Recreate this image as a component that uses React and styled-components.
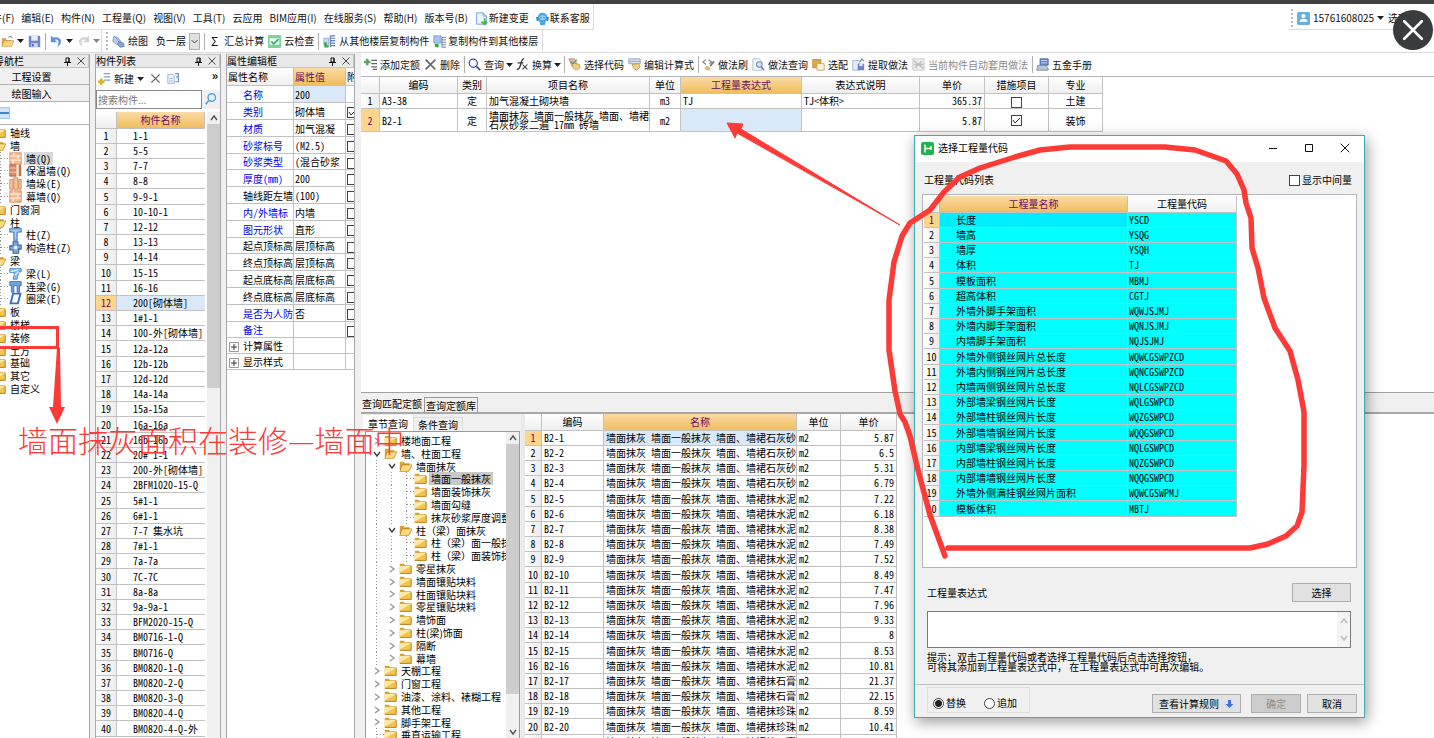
import React from "react";
import styled, { createGlobalStyle, css } from "styled-components";

const sans = `"Noto Sans CJK SC", "Liberation Sans", sans-serif`;
const red = "#fd3a36";

const Global = createGlobalStyle`
  * { box-sizing: border-box; }
  body { margin: 0; background: #fff; color: #000; font: 10px/14px ${sans}; }
  button, input, select, textarea { font: inherit; color: inherit; margin: 0; }
`;

const Page = styled.div`
  position: relative;
  height: 100vh;
  display: flex;
  flex-direction: column;
  overflow: hidden;
  white-space: nowrap;
`;
const TopStrip = styled.div`
  flex: none;
  height: 4px;
  background: #404040;
`;
const MenuRow = styled.div`
  flex: none;
  height: 26px;
  display: flex;
  justify-content: space-between;
`;
const MenuBar = styled.nav`
  display: flex;
  align-items: center;
  gap: 7px;
  height: 26px;
  padding: 3px 3px 0 0;
  margin-left: -18px;
  border-right: 1px solid #dcdcdc;
  border-bottom: 1px solid #dcdcdc;
`;
const FlatButton = styled.button`
  display: flex;
  align-items: center;
  gap: ${(p) => p.$gap || 3}px;
  border: 0;
  padding: 0;
  background: none;
  white-space: nowrap;
  line-height: 14px;
  color: ${(p) => (p.disabled ? "#8a8a8a" : "#111")};
`;
const UserBar = styled.div`
  width: 145px;
  height: 26px;
  display: flex;
  align-items: center;
  gap: 4px;
  padding: 3px 0 0 2px;
  overflow: hidden;
  border-bottom: 1px solid #dcdcdc;
`;
const Grip = styled.span`
  flex: none;
  height: 18px;
  border-left: 2px dotted #b8b8b8;
`;
const ToolRow = styled.div`
  flex: none;
  height: 23px;
  border-bottom: 1px solid #dcdcdc;
  display: flex;
`;
const ToolBar = styled.div`
  display: flex;
  align-items: center;
  gap: ${(p) => p.$gap || 4}px;
  padding: 0 ${(p) => p.$pad || 3}px;
  border-right: 1px solid #dcdcdc;
`;
const Sep = styled.span`
  flex: none;
  width: 1px;
  height: 17px;
  background: #b0b0b0;
`;
const Sigma = styled.span`
  font-size: 12px;
  margin-left: 2px;
`;
const SelectBox = styled.label`
  position: relative;
  display: flex;
  margin-left: 2px;
  select {
    appearance: none;
    width: 46px;
    height: 17px;
    padding: 0 10px 0 2px;
    border: 0;
    border-radius: 0;
    background: #fcfcfc;
  }
  svg {
    position: absolute;
    right: 0;
    top: 0;
    pointer-events: none;
  }
`;

const Work = styled.main`
  flex: 1;
  min-height: 0;
  display: flex;
  gap: 5px;
  padding-top: 1px;
  background: #f0f0f0;
`;
const Panel = styled.section`
  flex: none;
  width: ${(p) => p.$w}px;
  display: flex;
  flex-direction: column;
  overflow: hidden;
  background: #fff;
  border: solid #a8a8ac;
  border-width: 0 1px 0 ${(p) => (p.$first ? 0 : 1)}px;
`;
const PanelHead = styled.header`
  flex: none;
  height: 14px;
  display: flex;
  align-items: center;
  gap: 6px;
  padding-right: 3px;
  background: #e9e9e9;
  border: 1px solid #c4c4c4;
  border-left: 0;
  line-height: 12px;
  h2 { flex: 1; margin: 0 0 0 ${(p) => (p.$clipped ? -6 : 0)}px; font: inherit; font-size: 10px; }
`;
const IconButton = styled.button`
  display: flex;
  border: 0;
  padding: 0;
  background: none;
`;
const NavButton = styled.button`
  flex: none;
  height: 17px;
  padding: 0 26px 0 0;
  border: 0;
  border-bottom: 1px solid #b4b4b4;
  background: #f0f0f0;
  line-height: 15px;
`;
const NavMode = styled.div`
  flex: none;
  height: 23px;
  padding-top: 5px;
  border-bottom: 1px solid #b4b4b4;
  span { display: block; width: 10px; height: 12px; background: #cfe3fa; border: 1px solid #a9c8ee; border-left: 0; }
  i { display: block; margin-top: 4px; height: 2px; background: #3e86c8; }
`;

const NavTree = styled.ul`
  list-style: none;
  margin: 0;
  padding: 1px 0 0;
  margin-left: -7px;
`;
const Tree = styled.ul`
  list-style: none;
  margin: 0;
  padding: 2px 0 0 3px;
  flex: 1;
  overflow: hidden;
`;
const TreeItem = styled.li`
  display: flex;
  align-items: center;
  height: 13px;
  line-height: 13px;
  font-feature-settings: ${(p) => (p.$wide ? "normal" : '"hwid"')};
  &:nth-child(5n + 3) { height: 12px; }
  span.label { margin-left: 2px; padding: 0 2px; background: ${(p) => (p.$on ? p.$on : "none")}; }
  svg { flex: none; }
`;
const Guide = styled.span`
  flex: none;
  width: ${(p) => p.$w || 15}px;
  height: 13px;
  display: flex;
  align-items: center;
  justify-content: center;
  ${(p) => p.$line && css`background: repeating-linear-gradient(#999 0 1px, transparent 1px 3px) 7px 0 / 1px 13px no-repeat;`}
  ${(p) => p.$leaf && css`
    background:
      repeating-linear-gradient(#999 0 1px, transparent 1px 3px) 7px 0 / 1px 13px no-repeat,
      repeating-linear-gradient(90deg, #999 0 1px, transparent 1px 3px) 8px 6px / 8px 1px no-repeat;`}
`;

const ListTools = styled.div`
  flex: none;
  height: 21px;
  display: flex;
  align-items: center;
  gap: 6px;
  padding: 0 2px;
  b { margin: -8px 0 0 auto; font-size: 12px; }
`;
const SearchRow = styled.div`
  flex: none;
  display: flex;
  align-items: center;
  margin-bottom: 3px;
  height: 20px;
  input { width: 106px; height: 19px; border: 1px solid #8a8a8a; border-radius: 0; padding: 0 1px; background: #fff; }
  input::placeholder { color: #777; }
  button { flex: 1; height: 19px; background: #f0f0f0; justify-content: center; align-items: center; }
`;
const Scrolled = styled.div`
  flex: 1;
  min-height: 0;
  display: flex;
  overflow: hidden;
`;
const ScrollBar = styled.div`
  flex: none;
  width: 13px;
  margin-left: auto;
  display: flex;
  flex-direction: column;
  align-items: center;
  background: #f0f0f0;
  i { width: 100%; height: ${(p) => p.$thumb}px; background: #cdcdcd; }
  svg { flex: none; margin: 2px 0; }
  svg:last-child { margin-top: auto; }
`;

const Grid = styled.table`
  table-layout: fixed;
  width: ${(p) => p.$w}px;
  border-collapse: separate;
  border-spacing: 0;
  font-feature-settings: "hwid";
  th, td {
    height: 15px;
    padding: 0 ${(p) => p.$pad || 2}px;
    overflow: hidden;
    border: solid #c2c2c2;
    border-width: 0 1px 1px 0;
    font-weight: normal;
    text-align: left;
    line-height: 14px;
  }
  thead th {
    height: ${(p) => p.$head || 17}px;
    text-align: center;
    background: linear-gradient(#fff, #efefef);
  }
  tbody th { padding: 0; text-align: center; background: linear-gradient(90deg, #fff, #ececec); }
  thead th.hot { background: linear-gradient(#fadba4, #f0bd5e); color: #6a0d5c; }
  tbody th.hot { background: #ffd48c; color: #6a0d5c; }
  td.sel { background: #d9e9f8; }
  td.num { text-align: right; }
  td.mid { text-align: center; }
  td.name { padding-right: 0; }
  tbody tr:nth-child(5n) > * { height: 16px; }
`;
const ListGrid = styled(Grid)`
  tbody td { padding-left: 16px; border-right: 0; }
`;
const PropGrid = styled(Grid)`
  tbody th, tbody td { height: 17px; line-height: 15px; background: #fff; }
  tbody tr:nth-child(5n) > * { height: 16px; }
  tbody tr.group > * { height: 15px; }
  tbody th { padding-left: 16px; text-align: left; color: #0000f0; }
  tbody tr.plain th { color: #000; }
  tbody tr.group th { padding-left: 2px; color: #000; }
  thead th { text-align: left; }
  td.sel { background: #d9e9f8; }
  th button { display: inline-flex; vertical-align: middle; margin-right: 4px; }
  td:last-child, thead th:last-child { border-right: 0; }
`;
const MainGrid = styled(Grid)`
  tbody tr.tall > * { height: 23px; line-height: 9px; }
`;
const Cyan = styled(Grid)`
  tbody td { background: #0ff; }
  tbody td:nth-child(2) { padding-left: 16px; }
  tbody td:nth-child(3) { padding-left: 1px; }
  tbody tr:first-child td:nth-child(2) { background: #00ecff; }
`;
const Check = styled.input`
  appearance: none;
  flex: none;
  display: inline-block;
  vertical-align: middle;
  width: 11px;
  height: 11px;
  border: 1px solid #444;
  border-radius: 0;
  background: #fff;
`;
const CheckCell = styled.label`
  position: relative;
  display: inline-flex;
  vertical-align: middle;
  svg { position: absolute; left: 1px; top: 1px; pointer-events: none; }
`;

const Main = styled.section`
  flex: 1;
  min-width: 0;
  display: flex;
  flex-direction: column;
  margin-left: 1px;
  margin-top: -1px;
  background: #fff;
`;
const MainTools = styled.div`
  flex: none;
  height: 24px;
  display: flex;
  align-items: center;
  gap: 4px;
  padding-left: 3px;
  border-bottom: 1px solid #b4b4b4;
  ${Sep} { margin-right: -1px; }
  svg + svg, button > svg:last-child:not(:first-child) { margin: 0 -1px; }
`;
const MainSheet = styled.div`
  flex: none;
  height: 315px;
`;
const Tabs = styled.div`
  flex: none;
  height: 22px;
  display: flex;
  align-items: flex-end;
  gap: 2px;
  background: #f0f0f0;
  border-top: 1px solid #a0a0a0;
  border-bottom: 2px solid #a8a8a8;
  padding-left: 1px;
`;
const Tab = styled.button`
  height: ${(p) => (p.$on ? 17 : 15)}px;
  padding: 0 ${(p) => (p.$on ? 0 : 1)}px;
  border: ${(p) => (p.$on ? 0 : "1px solid #999")};
  border-bottom: 0;
  background: #f0f0f0;
  line-height: 13px;
`;
const Lower = styled.div`
  flex: 1;
  min-height: 0;
  display: flex;
  overflow: hidden;
`;
const Chapter = styled.div`
  flex: none;
  width: 164px;
  display: flex;
  flex-direction: column;
  background: #f0f0f0;
  border-right: 4px solid #eaeaea;
`;
const SubTabs = styled.div`
  flex: none;
  display: flex;
  align-items: flex-end;
  height: 17px;
  padding-left: 2px;
`;
const SubTab = styled.button`
  height: ${(p) => (p.$on ? 16 : 14)}px;
  padding: 0 4px;
  border: 1px solid ${(p) => (p.$on ? "#fff" : "#dcdcdc")};
  border-bottom: 0;
  background: ${(p) => (p.$on ? "#fff" : "#f0f0f0")};
  line-height: 13px;
`;
const TreeBox = styled.div`
  flex: 1;
  min-height: 0;
  display: flex;
  margin: 0 0 0 4px;
  width: 155px;
  background: #fff;
  border: 1px solid #9a9aa0;
  border-bottom: 0;
`;

const Dialog = styled.section`
  position: absolute;
  left: 914px;
  top: 135px;
  width: 451px;
  background: #f0f0f0;
  border: 1px solid #3fa9b5;
  box-shadow: 2px 4px 14px rgba(0, 0, 0, 0.4);
`;
const TitleBar = styled.header`
  height: 26px;
  display: flex;
  align-items: center;
  gap: 4px;
  padding: 0 14px 2px 6px;
  background: #fff;
  h1 { flex: 1; margin: 0; font: inherit; font-size: 10px; }
  button + button { margin-left: 22px; }
`;
const DialogRow = styled.div`
  display: flex;
  align-items: center;
  justify-content: space-between;
  padding: ${(p) => p.$p};
`;
const OptionLabel = styled.label`
  display: flex;
  align-items: center;
  gap: 2px;
`;
const CodeBox = styled.div`
  height: 374px;
  margin: 0 7px;
  padding: 1px;
  background: #fff;
  border: 1px solid #b4b4bc;
`;
const PushButton = styled.button`
  height: 19px;
  width: ${(p) => p.$w}px;
  display: flex;
  align-items: center;
  justify-content: center;
  gap: 6px;
  padding: 0;
  border: 1px solid #adadad;
  border-radius: 0;
  background: ${(p) => (p.disabled ? "#cccccc" : "#e1e1e1")};
  color: ${(p) => (p.disabled ? "#8c8c8c" : "#000")};
`;
const Expression = styled.div`
  height: 37px;
  margin: 0 13px 0 12px;
  display: flex;
  background: #fff;
  border: 1px solid #7a7a7a;
  textarea { flex: 1; border: 0; padding: 1px; resize: none; outline: 0; background: none; overflow: hidden; }
  div { width: 13px; display: flex; flex-direction: column; justify-content: space-between; align-items: center; padding: 5px 0; background: #f4f4f4; }
`;
const Hint = styled.p`
  margin: 4px 12px 12px;
  line-height: 10px;
`;
const Footer = styled.footer`
  display: flex;
  align-items: flex-end;
  gap: 10px;
  height: 33px;
  padding: 3px 7px 4px 12px;
  border-top: 1px solid #c0c0c0;
  fieldset {
    display: flex; align-items: center; gap: 18px; height: 26px; width: 103px;
    margin: 0 auto 0 0; padding: 6px 0 0 5px; border: 1px solid #dedede;
  }
  button:last-child { margin-left: -4px; }
`;
const Radio = styled.input.attrs({ type: "radio" })`
  appearance: none;
  width: 11px;
  height: 11px;
  border: 1px solid #444;
  border-radius: 50%;
  background: #fff;
  &:checked { background: radial-gradient(#222 0 3px, #fff 4px); }
`;

const Marks = styled.svg`
  position: absolute;
  left: 0;
  top: 0;
  pointer-events: none;
`;
const Note = styled.p`
  position: absolute;
  left: 18px;
  top: 419px;
  margin: 0;
  color: ${red};
  font-size: 30px;
  font-weight: 300;
  line-height: 40px;
`;
const CloseViewer = styled.button`
  position: absolute;
  right: 1px;
  top: 10px;
  width: 40px;
  height: 40px;
  display: flex;
  align-items: center;
  justify-content: center;
  border: 0;
  border-radius: 50%;
  background: #3a3b3c;
`;

/* ---- icons ---- */
const shapes = {
  open: <><path d="M1 4h5l1 2h6v7H1z" fill="#d9a441" /><path d="M4 7h12l-3 7H1z" fill="#f8d488" stroke="#c48f2f" strokeWidth=".7" /><path d="M9 3c2-2 4-1 5 1" fill="none" stroke="#7d9ac7" strokeWidth="1.3" /></>,
  save: <><path d="M1 1h14v14H1z" fill="#6f86cf" /><path d="M4 1h8v6H4z" fill="#e8edfb" /><path d="M4 10h8v5H4z" fill="#c9d2ef" /><path d="M5 11h2v3H5z" fill="#4a5fa8" /></>,
  undo: <path d="M1 1v8h8L6 6c4-2 6 1 3 9 8-6 5-14-5-12z" fill="#5f93dd" />,
  redo: <path d="M15 1v8H7l3-3C6 4 4 7 7 15-1 9 2 1 12 3z" fill="#d3d3d3" />,
  paint: <><path d="M2 2l5 1 4 5-5 4-5-4z" fill="#bcd0ec" stroke="#6d8fc4" /><path d="M8 8l6 2 1 4-5 1-3-3z" fill="#8fa9d6" stroke="#4f6fae" /><path d="M3 1l5 7" stroke="#6d8fc4" /></>,
  check: <><rect width="16" height="16" rx="1" fill="#7fd09b" /><path d="M2 4h12v8H2z" fill="#e7f8ec" /><path d="M4 8l3 3 6-6" fill="none" stroke="#2fae62" strokeWidth="2" /></>,
  copyFrom: <><path d="M1 4h6v8H1z" fill="#c8d6ee" stroke="#8fa8d2" /><path d="M9 1h6M9 4h6M9 7h6M9 10h6M9 13h6M9 1v14" stroke="#5f7fb8" strokeWidth="1.4" /><path d="M3 9v5h4" stroke="#35a853" strokeWidth="3" fill="none" /></>,
  copyTo: <><path d="M1 1h9v9H1z" fill="#a9c2ea" stroke="#7d9cd0" /><path d="M11 3h5M11 6h5M11 9h5M11 12h5M11 15h5M11 3v12" stroke="#6a7f9f" strokeWidth="1.2" /><path d="M2 11h5v4H3z" fill="#35a853" /></>,
  doc: <><path d="M2 1h8l4 4v10H2z" fill="#e9f3fc" stroke="#5b9bd0" /><path d="M10 1v4h4" fill="none" stroke="#5b9bd0" /><path d="M12 8v7M8 12l4 3 3-3" fill="none" stroke="#4cb648" strokeWidth="2.4" /></>,
  support: <><circle cx="8" cy="7" r="6" fill="#49a7e4" /><path d="M0 6h3v5H1zM13 6h3l-1 5h-2z" fill="#2d86c8" /><ellipse cx="8" cy="7" rx="4" ry="3" fill="#8fd0f5" /><path d="M6 6v2M10 6v2" stroke="#1c6aa8" /><path d="M5 12h7l-1 4H5z" fill="#49a7e4" /></>,
  user: <><rect width="16" height="16" rx="2" fill="#6aaedb" /><circle cx="8" cy="5" r="2.6" fill="#fff" /><path d="M3 12c0-5 10-5 10 0z" fill="#fff" /></>,
  addRow: <><path d="M9 3h7M9 7h7M9 11h7M11 14h5" stroke="#666" strokeWidth="1.4" /><path d="M4 1v8M0 5h8" stroke="#5da56c" strokeWidth="3" /></>,
  newItem: <><path d="M7 2h8M7 6h8M7 10h8" stroke="#7ba3d2" strokeWidth="1.6" /><path d="M4 8v8M0 12h8" stroke="#d5b32d" strokeWidth="3" /></>,
  del: <path d="M2 2l12 12M14 2L2 14" stroke="#666" strokeWidth="2" fill="none" />,
  search: <><circle cx="6.5" cy="6.5" r="5" fill="#f2f5ff" stroke="#3c49a8" strokeWidth="1.5" /><path d="M10 10l5 5" stroke="#3c49a8" strokeWidth="2" /></>,
  find: <><circle cx="9" cy="6" r="5" fill="#e8f5ff" stroke="#4ba0de" strokeWidth="1.8" /><path d="M5 10l-4 5" stroke="#4ba0de" strokeWidth="2.2" /></>,
  fx: <><path d="M10 1c-5-1-3 14-9 13M2 6h7" fill="none" stroke="#333" strokeWidth="1.6" /><path d="M8 8l6 6M14 8l-6 6" stroke="#333" strokeWidth="1.3" /></>,
  pick: <><path d="M1 1h7l3 6-6 3z" fill="#e4b7b0" stroke="#b88a82" /><path d="M5 6l9 2 1 4-5 3-4-3z" fill="#f1cf8b" stroke="#c09649" /><path d="M3 4l3 3 5-5" fill="none" stroke="#5f9e61" strokeWidth="1.5" /></>,
  edit: <><path d="M1 1h14v6H1z" fill="#d9dfec" stroke="#8b99b8" /><path d="M1 4h14" stroke="#8b99b8" /><path d="M5 8l8-1 2 4-4 4-4-2z" fill="#f1cf8b" stroke="#c09649" /></>,
  brush: <><path d="M5 2L1 5l4 3M8 2l4 3-3 2" fill="none" stroke="#777" strokeWidth="1.3" /><path d="M15 4l-5 6" stroke="#777" strokeWidth="2" /><path d="M6 10l4 3-2 2-4-2z" fill="#efc46a" stroke="#c09649" /></>,
  docFind: <><path d="M1 1h8l3 3v11H1z" fill="#f3f6fb" stroke="#a7b6cc" /><circle cx="9" cy="8" r="3.5" fill="#cfe4f7" stroke="#6d93bf" strokeWidth="1.3" /><path d="M11 11l4 4" stroke="#7d8aa0" strokeWidth="2" /></>,
  paste: <><path d="M1 2h10v10H1z" fill="#e4ad3e" stroke="#b27f22" /><path d="M4 1h4v3H4z" fill="#a0a0a0" /><path d="M6 7h9v8H6z" fill="#fdf6dd" stroke="#b9a15e" /></>,
  extract: <><path d="M1 3h8v12H1z" fill="#e6edf8" stroke="#93a7cb" /><path d="M7 7h8v8H7z" fill="#6f7fcb" /><path d="M9 7h4v3H9z" fill="#e8edfb" /><path d="M10 5l2-4 3 3" stroke="#5f7fb8" fill="none" strokeWidth="1.3" /></>,
  off: <><path d="M1 1h14v14H1z" fill="#ececec" stroke="#c6c6c6" /><path d="M2 3l12 10M4 12l8-8M2 8h12" stroke="#bdbdbd" strokeWidth="1.6" /></>,
  manual: <><path d="M5 1h10v8H5z" fill="#5e85cf" stroke="#4569b0" /><path d="M6 3h8M6 6h8" stroke="#dfe8fa" /><path d="M2 9h10l3 4v2H1z" fill="#b9c3d4" stroke="#7987a0" /></>,
  copy: <><path d="M1 3h6l2 2v9H1z" fill="#eef3fb" stroke="#8fa8d2" /><path d="M3 8h4M3 11h4" stroke="#8fa8d2" /><path d="M10 2h4v4h-3M14 6v6h-4" fill="none" stroke="#6d93d0" strokeWidth="1.5" /></>,
  folder: <><path d="M1 2h5l1 2h8v10H1z" fill="#dba42e" /><path d="M1 5h14v9H1z" fill="#f3c450" /><path d="M1 5h14L1 13z" fill="#fde9a6" /><path d="M1 14h14V5" fill="none" stroke="#a87417" /></>,
  folderOpen: <><path d="M1 2h5l1 2h6v9H1z" fill="#dba42e" /><path d="M4 6h12l-4 8H1z" fill="#fbdc83" stroke="#b07d1c" strokeWidth=".8" /></>,
  wall: <><path d="M1 1h14v14H1z" fill="#f2bd94" stroke="#d08155" /><path d="M1 5h14M1 10h14M6 1v4M11 5v5M5 10v5" stroke="#fff1e4" strokeWidth="1.2" /></>,
  wall2: <><path d="M1 1h8v14H1z" fill="#d98c6d" stroke="#a95c40" /><path d="M9 1h3v14H9z" fill="#f6e3b5" /><path d="M12 1h3v14h-3z" fill="#c3714f" /><path d="M1 5h8M1 10h8" stroke="#f8dccb" /></>,
  wall3: <><path d="M1 3h4v12H1zM6 1h5v14H6zM12 3h3v12h-3z" fill="#f5c4a0" stroke="#cf7c4e" /></>,
  column: <path d="M1 1h14v4h-4l-1 1v9H6V6L5 5H1z" fill="#a9c9f0" stroke="#3f74b8" strokeWidth="1.3" />,
  column2: <><path d="M5 1h6v4h4v5h-3v5H5v-4H1V6h4z" fill="#7ea7dc" stroke="#35629f" strokeWidth="1.3" /><path d="M6 6h4v4H6z" fill="#e4effc" /></>,
  beam: <><path d="M1 2h14v4h-3l-2 9H5l2-8H1z" fill="#8fc0ee" stroke="#3a7fc4" /><path d="M2 6l9-3M7 10l5-4" stroke="#e3f2ff" strokeWidth="1.4" /></>,
  beam2: <path d="M1 2h14v5h-2v8h-3V7H6v8H3V7H1z" fill="#6fa4de" stroke="#2f67a8" />,
  beam3: <path d="M5 2h9l-3 12H2z" fill="#fff" stroke="#3a6fc4" strokeWidth="2.4" />,
};
const Icon = ({ n, s = 13 }) => (
  <svg width={s} height={s} viewBox="0 0 16 16" aria-hidden="true">{shapes[n]}</svg>
);
const Caret = ({ c = "#222" }) => (
  <svg width="7" height="4" viewBox="0 0 7 4" aria-hidden="true"><path d="M0 0h7L3.500 4z" fill={c} /></svg>
);
const Chevron = ({ d = "up", c = "#555" }) => {
  const path = { up: "M1 6l3-4 3 4", down: "M1 2l3 4 3-4", right: "M2 1l4 3-4 3" }[d];
  return <svg width="8" height="8" viewBox="0 0 8 8" aria-hidden="true"><path d={path} fill="none" stroke={c} strokeWidth="1.4" /></svg>;
};
const Cross = ({ s = 8, w = 1.2, c = "#444" }) => (
  <svg width={s} height={s} viewBox="0 0 10 10" aria-hidden="true"><path d="M1 1l8 8M9 1l-8 8" stroke={c} strokeWidth={w} strokeLinecap="round" /></svg>
);
const Pin = () => (
  <svg width="7" height="9" viewBox="0 0 7 9" aria-hidden="true"><path d="M2 1h3v4H2zM0 5.500h7M3.500 6v3M5 1v4" fill="none" stroke="#111" /></svg>
);

/* ---- data ---- */
const menus = ["文件(F)", "编辑(E)", "构件(N)", "工程量(Q)", "视图(V)", "工具(T)", "云应用", "BIM应用(I)", "在线服务(S)", "帮助(H)", "版本号(B)"];
const navTree = [
  [0, "轴线"], [0, "墙", "folderOpen"], [1, "墙(Q)", "wall", "on"], [1, "保温墙(Q)", "wall2"], [1, "墙垛(E)", "wall3"], [1, "幕墙(Q)", "wall"],
  [0, "门窗洞"], [0, "柱", "folderOpen"], [1, "柱(Z)", "column"], [1, "构造柱(Z)", "column2"], [0, "梁", "folderOpen"], [1, "梁(L)", "beam"],
  [1, "连梁(G)", "beam2"], [1, "圈梁(E)", "beam3"], [0, "板"], [0, "楼梯"], [0, "装修"], [0, "土方"], [0, "基础"], [0, "其它"], [0, "自定义"],
];
const components = ["1-1", "5-5", "7-7", "8-8", "9-9-1", "10-10-1", "12-12", "13-13", "14-14", "15-15", "16-16", "200[砌体墙]", "1#1-1", "100-外[砌体墙]", "12a-12a", "12b-12b", "12d-12d", "14a-14a", "15a-15a", "16a-16a", "16b-16b", "20# 1-1", "200-外[砌体墙]", "2BFM1020-15-Q", "5#1-1", "6#1-1", "7-7 集水坑", "7#1-1", "7a-7a", "7C-7C", "8a-8a", "9a-9a-1", "BFM2020-15-Q", "BM0716-1-Q", "BM0716-Q", "BM0820-1-Q", "BM0820-2-Q", "BM0820-3-Q", "BM0820-4-Q", "BM0820-4-Q-外"];
const props = [
  ["名称", "200", "", "sel"], ["类别", "砌体墙", "", "", true], ["材质", "加气混凝"], ["砂浆标号", "(M2.5)"], ["砂浆类型", "(混合砂浆"], ["厚度(mm)", "200"],
  ["轴线距左墙", "(100)", "plain"], ["内/外墙标", "内墙"], ["图元形状", "直形"], ["起点顶标高", "层顶标高", "plain"], ["终点顶标高", "层顶标高", "plain"],
  ["起点底标高", "层底标高", "plain"], ["终点底标高", "层底标高", "plain"], ["是否为人防", "否"], ["备注", ""],
];
const chapters = [
  [0, "right", "楼地面工程"], [0, "down", "墙、柱面工程"], [1, "down", "墙面抹灰"], [2, "", "墙面一般抹灰", "on"], [2, "", "墙面装饰抹灰"], [2, "", "墙面勾缝"],
  [2, "", "抹灰砂浆厚度调整"], [1, "down", "柱（梁）面抹灰"], [2, "", "柱（梁）面一般抹灰"], [2, "", "柱（梁）面装饰抹灰"], [1, "right", "零星抹灰"],
  [1, "right", "墙面镶贴块料"], [1, "right", "柱面镶贴块料"], [1, "right", "零星镶贴块料"], [1, "right", "墙饰面"], [1, "right", "柱(梁)饰面"], [1, "right", "隔断"],
  [1, "right", "幕墙"], [0, "right", "天棚工程"], [0, "right", "门窗工程"], [0, "right", "油漆、涂料、裱糊工程"], [0, "right", "其他工程"], [0, "right", "脚手架工程"], [0, "", "垂直运输工程"],
];
const prices = ["5.87", "6.5", "5.31", "6.79", "7.22", "6.18", "8.38", "7.49", "7.52", "8.49", "7.47", "7.96", "9.33", "8", "8.53", "10.81", "21.37", "22.15", "8.59", "10.41", "12.26"];
const materialOf = (i) => (i < 4 ? "石灰砂" : i < 16 ? "抹水泥" : i < 18 ? "抹石膏" : i < 20 ? "抹珍珠" : "抹石膏");
const codes = [
  ["长度", "YSCD"], ["墙高", "YSQG"], ["墙厚", "YSQH"], ["体积", "TJ"], ["模板面积", "MBMJ"], ["超高体积", "CGTJ"], ["外墙外脚手架面积", "WQWJSJMJ"], ["外墙内脚手架面积", "WQNJSJMJ"],
  ["内墙脚手架面积", "NQJSJMJ"], ["外墙外侧钢丝网片总长度", "WQWCGSWPZCD"], ["外墙内侧钢丝网片总长度", "WQNCGSWPZCD"], ["内墙两侧钢丝网片总长度", "NQLCGSWPZCD"],
  ["外部墙梁钢丝网片长度", "WQLGSWPCD"], ["外部墙柱钢丝网片长度", "WQZGSWPCD"], ["外部墙墙钢丝网片长度", "WQQGSWPCD"], ["内部墙梁钢丝网片长度", "NQLGSWPCD"],
  ["内部墙柱钢丝网片长度", "NQZGSWPCD"], ["内部墙墙钢丝网片长度", "NQQGSWPCD"], ["外墙外侧满挂钢丝网片面积", "WQWCGSWPMJ"], ["模板体积", "MBTJ"],
];

const Cols = ({ w }) => <colgroup>{w.map((x, i) => <col key={i} width={x} />)}</colgroup>;
const Tick = ({ checked, label }) => (
  <CheckCell>
    <Check type="checkbox" defaultChecked={checked} aria-label={label} />
    {checked && <svg width="9" height="9" viewBox="0 0 9 9" aria-hidden="true"><path d="M1 4l2 3 5-5" fill="none" stroke="#333" /></svg>}
  </CheckCell>
);
const Head = ({ title, clipped }) => (
  <PanelHead $clipped={clipped}>
    <h2>{title}</h2>
    <IconButton aria-label="固定"><Pin /></IconButton>
    <IconButton aria-label="关闭"><Cross /></IconButton>
  </PanelHead>
);
const Tool = ({ n, children, caret, disabled, gap }) => (
  <FlatButton disabled={disabled} $gap={gap}><Icon n={n} />{children}{caret && <Caret />}</FlatButton>
);

export default function App() {
  return (
    <Page>
      <Global />
      <TopStrip />
      <MenuRow>
        <MenuBar>
          {menus.map((m) => <FlatButton key={m}>{m}</FlatButton>)}
          <Tool n="doc" gap={1}>新建变更</Tool>
          <Tool n="support" gap={1}>联系客服</Tool>
        </MenuBar>
        <UserBar>
          <Grip />
          <Tool n="user" caret>15761608025</Tool>
          <FlatButton>选项</FlatButton>
        </UserBar>
      </MenuRow>
      <ToolRow>
        <ToolBar $gap={4} $pad={1}>
          <FlatButton aria-label="打开"><Icon n="open" /><Caret /></FlatButton>
          <IconButton aria-label="保存"><Icon n="save" /></IconButton>
          <Sep />
          <FlatButton aria-label="撤销"><Icon n="undo" /><Caret /></FlatButton>
          <FlatButton aria-label="恢复"><Icon n="redo" /><Caret c="#888" /></FlatButton>
        </ToolBar>
        <ToolBar $gap={4} $pad={4}>
          <Grip />
          <Tool n="paint">绘图</Tool>
          <SelectBox>
            <select aria-label="楼层" defaultValue="负一层"><option>负一层</option></select>
            <svg width="11" height="17" aria-hidden="true"><path d="M.5.5h10v16H.5z" fill="#e1e1e1" stroke="#adadad" /><path d="M2.500 7l3 3 3-3" fill="none" stroke="#444" /></svg>
          </SelectBox>
          <Sep />
          <FlatButton $gap={6}><Sigma>Σ</Sigma>汇总计算</FlatButton>
          <Tool n="check">云检查</Tool>
          <Sep />
          <Tool n="copyFrom">从其他楼层复制构件</Tool>
          <Tool n="copyTo" gap={2}>复制构件到其他楼层</Tool>
        </ToolBar>
      </ToolRow>

      <Work>
        <Panel $w={90} $first>
          <Head title="导航栏" clipped />
          <NavButton>工程设置</NavButton>
          <NavButton>绘图输入</NavButton>
          <NavMode><span><i /></span></NavMode>
          <NavTree>
            {navTree.map(([lv, t, ic, on]) => (
              <TreeItem key={t} $on={on && "#d9d9d9"}>
                {lv === 1 && <Guide $w={16} $leaf />}
                <Icon n={ic || "folder"} />
                <span className="label">{t}</span>
              </TreeItem>
            ))}
          </NavTree>
        </Panel>

        <Panel $w={126}>
          <Head title="构件列表" />
          <ListTools>
            <Tool n="newItem" caret>新建</Tool>
            <IconButton aria-label="删除"><Icon n="del" s={11} /></IconButton>
            <IconButton aria-label="复制"><Icon n="copy" /></IconButton>
            <b>»</b>
          </ListTools>
          <SearchRow>
            <input placeholder="搜索构件..." aria-label="搜索构件" />
            <IconButton aria-label="搜索"><Icon n="find" s={12} /></IconButton>
          </SearchRow>
          <Scrolled>
            <div>
              <ListGrid $w={109}>
                <Cols w={[21, 88]} />
                <thead><tr><th /><th className="hot">构件名称</th></tr></thead>
                <tbody>
                  {components.map((c, i) => (
                    <tr key={c}><th className={i === 11 ? "hot" : ""}>{i + 1}</th><td className={i === 11 ? "sel" : ""}>{c}</td></tr>
                  ))}
                </tbody>
              </ListGrid>
            </div>
            <ScrollBar $thumb={264}><Chevron /><i /></ScrollBar>
          </Scrolled>
        </Panel>

        <Panel $w={129}>
          <Head title="属性编辑框" />
          <PropGrid $w={127} $pad={1} $head={18}>
            <Cols w={[67, 52, 8]} />
            <thead><tr><th>属性名称</th><th className="hot">属性值</th><th>附加</th></tr></thead>
            <tbody>
              {props.map(([k, v, kind, sel, ticked]) => (
                <tr key={k} className={kind}><th>{k}</th><td className={sel}>{v}</td><td>{!sel && <Tick label={k} checked={ticked} />}</td></tr>
              ))}
              {["计算属性", "显示样式"].map((g) => (
                <tr key={g} className="group">
                  <th>
                    <IconButton aria-label={g}>
                      <svg width="10" height="10" aria-hidden="true"><path d="M.5.5h9v9h-9z" fill="#fff" stroke="#999" /><path d="M2 5h6M5 2v6" stroke="#333" /></svg>
                    </IconButton>
                    {g}
                  </th><td /><td />
                </tr>
              ))}
            </tbody>
          </PropGrid>
        </Panel>

        <Main>
          <MainTools>
            <Tool n="addRow">添加定额</Tool>
            <Tool n="del">删除</Tool>
            <Sep />
            <Tool n="search" caret>查询</Tool>
            <Tool n="fx" caret>换算</Tool>
            <Sep />
            <Tool n="pick">选择代码</Tool>
            <Tool n="edit">编辑计算式</Tool>
            <Sep />
            <Tool n="brush">做法刷</Tool>
            <Tool n="docFind">做法查询</Tool>
            <Tool n="paste">选配</Tool>
            <Tool n="extract">提取做法</Tool>
            <Tool n="off" disabled>当前构件自动套用做法</Tool>
            <Sep />
            <Tool n="manual">五金手册</Tool>
          </MainTools>
          <MainSheet>
            <MainGrid $w={742}>
              <Cols w={[19, 78, 29, 163, 31, 121, 118, 65, 64, 54]} />
              <thead>
                <tr><th /><th>编码</th><th>类别</th><th>项目名称</th><th>单位</th><th className="hot">工程量表达式</th><th>表达式说明</th><th>单价</th><th>措施项目</th><th>专业</th></tr>
              </thead>
              <tbody>
                <tr><th>1</th><td>A3-38</td><td className="mid">定</td><td>加气混凝土砌块墙</td><td className="mid">m3</td><td>TJ</td><td>TJ&lt;体积&gt;</td><td className="num">365.37</td><td className="mid"><Tick label="措施项目 1" /></td><td className="mid">土建</td></tr>
                <tr className="tall"><th className="hot">2</th><td>B2-1</td><td className="mid">定</td><td className="name">墙面抹灰 墙面一般抹灰 墙面、墙裙<br />石灰砂浆二遍 17mm 砖墙</td><td className="mid">m2</td><td className="sel" /><td /><td className="num">5.87</td><td className="mid"><Tick label="措施项目 2" checked /></td><td className="mid">装饰</td></tr>
              </tbody>
            </MainGrid>
          </MainSheet>
          <Tabs><Tab $on>查询匹配定额</Tab><Tab>查询定额库</Tab></Tabs>
          <Lower>
            <Chapter>
              <SubTabs><SubTab $on>章节查询</SubTab><SubTab>条件查询</SubTab></SubTabs>
              <TreeBox>
                <Tree>
                  {chapters.map(([lv, state, t, on]) => (
                    <TreeItem key={t} $wide $on={on && "#c8c8c8"}>
                      {Array.from({ length: lv }, (_, i) => <Guide key={i} $line />)}
                      <Guide $leaf={!state}>{state && <Chevron d={state} c={state === "down" ? "#444" : "#999"} />}</Guide>
                      <Icon n={state === "down" ? "folderOpen" : "folder"} />
                      <span className="label">{t}</span>
                    </TreeItem>
                  ))}
                </Tree>
                <ScrollBar $thumb={250}><Chevron /><i /><Chevron d="down" /></ScrollBar>
              </TreeBox>
            </Chapter>
            <div>
              <Grid $w={372} $pad={2}>
                <Cols w={[17, 62, 193, 44, 56]} />
                <thead><tr><th /><th>编码</th><th className="hot">名称</th><th>单位</th><th>单价</th></tr></thead>
                <tbody>
                  {prices.map((p, i) => (
                    <tr key={i}><th className={i ? "" : "hot"}>{i + 1}</th><td>B2-{i + 1}</td><td className={i ? "name" : "name sel"}>墙面抹灰 墙面一般抹灰 墙面、墙裙{materialOf(i)}</td><td>m2</td><td className="num">{p}</td></tr>
                  ))}
                </tbody>
              </Grid>
            </div>
          </Lower>
        </Main>
      </Work>

      <Note>墙面抹灰面积在装修—墙面中</Note>

      <Dialog role="dialog" aria-label="选择工程量代码">
        <TitleBar>
          <svg width="13" height="13" viewBox="0 0 13 13" aria-hidden="true"><rect width="13" height="13" rx="2" fill="#22b14c" /><path d="M4 2.500v8M4 6.500h6M10 4v4" stroke="#fff" strokeWidth="1.4" fill="none" /></svg>
          <h1>选择工程量代码</h1>
          <IconButton aria-label="最小化"><svg width="10" height="10" aria-hidden="true"><path d="M1 5.500h8" stroke="#111" /></svg></IconButton>
          <IconButton aria-label="最大化"><svg width="10" height="10" aria-hidden="true"><path d="M1.500 1.500h7v7h-7z" fill="none" stroke="#111" /></svg></IconButton>
          <IconButton aria-label="关闭"><Cross s={10} w={1} c="#111" /></IconButton>
        </TitleBar>
        <DialogRow $p="11px 12px 7px 9px">
          <span>工程量代码列表</span>
          <OptionLabel><Check type="checkbox" />显示中间量</OptionLabel>
        </DialogRow>
        <CodeBox>
          <Cyan $w={313}>
            <Cols w={[16, 188, 109]} />
            <thead><tr><th /><th className="hot">工程量名称</th><th>工程量代码</th></tr></thead>
            <tbody>
              {codes.map(([n, c], i) => <tr key={c}><th className={i ? "" : "hot"}>{i + 1}</th><td>{n}</td><td>{c}</td></tr>)}
            </tbody>
          </Cyan>
        </CodeBox>
        <DialogRow $p="15px 13px 9px 12px">
          <label htmlFor="expr">工程量表达式</label>
          <PushButton $w={59}>选择</PushButton>
        </DialogRow>
        <Expression>
          <textarea id="expr" />
          <div><Chevron c="#bbb" /><Chevron d="down" c="#bbb" /></div>
        </Expression>
        <Hint>提示：双击工程量代码或者选择工程量代码后点击选择按钮，<br />可将其添加到工程量表达式中， 在工程量表达式中可再次编辑。</Hint>
        <Footer>
          <fieldset>
            <OptionLabel><Radio name="mode" defaultChecked />替换</OptionLabel>
            <OptionLabel><Radio name="mode" />追加</OptionLabel>
          </fieldset>
          <PushButton $w={89}>
            查看计算规则
            <svg width="9" height="10" viewBox="0 0 9 10" aria-hidden="true"><path d="M3 1h3v4h2.500L4.500 9 .5 5H3z" fill="#3f6fe0" /></svg>
          </PushButton>
          <PushButton $w={50} disabled>确定</PushButton>
          <PushButton $w={50}>取消</PushButton>
        </Footer>
      </Dialog>

      <Marks width="1434" height="738" viewBox="0 0 1434 738" aria-hidden="true">
        <path d="M945 556L930 515 918 470 910 436 905 422 900 414 895 391 889 350 889 300 894 262 902 236 910 223 930 210 944 192 960 177 980 168 1015 157 1040 150 1070 147H1165L1195 150 1215 157 1226 161 1237 174 1244 190 1246 203 1251 218 1252 248 1258 268 1264 298 1275 328 1290 351 1298 380 1304 412V465L1302 512 1297 526 1286 536 1268 544 1250 548H948" fill="none" stroke={red} strokeWidth="5.500" strokeLinecap="round" strokeLinejoin="round" />
        <path d="M727 123l16 1-2 5 159 96-163-92-2 5z" fill={red} stroke={red} />
        <path d="M0 327.500h57.500V347.500H0" fill="none" stroke={red} strokeWidth="3" />
        <path d="M57 348l3 0 1 59h4l-8 17-8-17h4z" fill={red} />
      </Marks>
      <CloseViewer aria-label="关闭预览"><Cross s={22} w={1.2} c="#fff" /></CloseViewer>
    </Page>
  );
}
